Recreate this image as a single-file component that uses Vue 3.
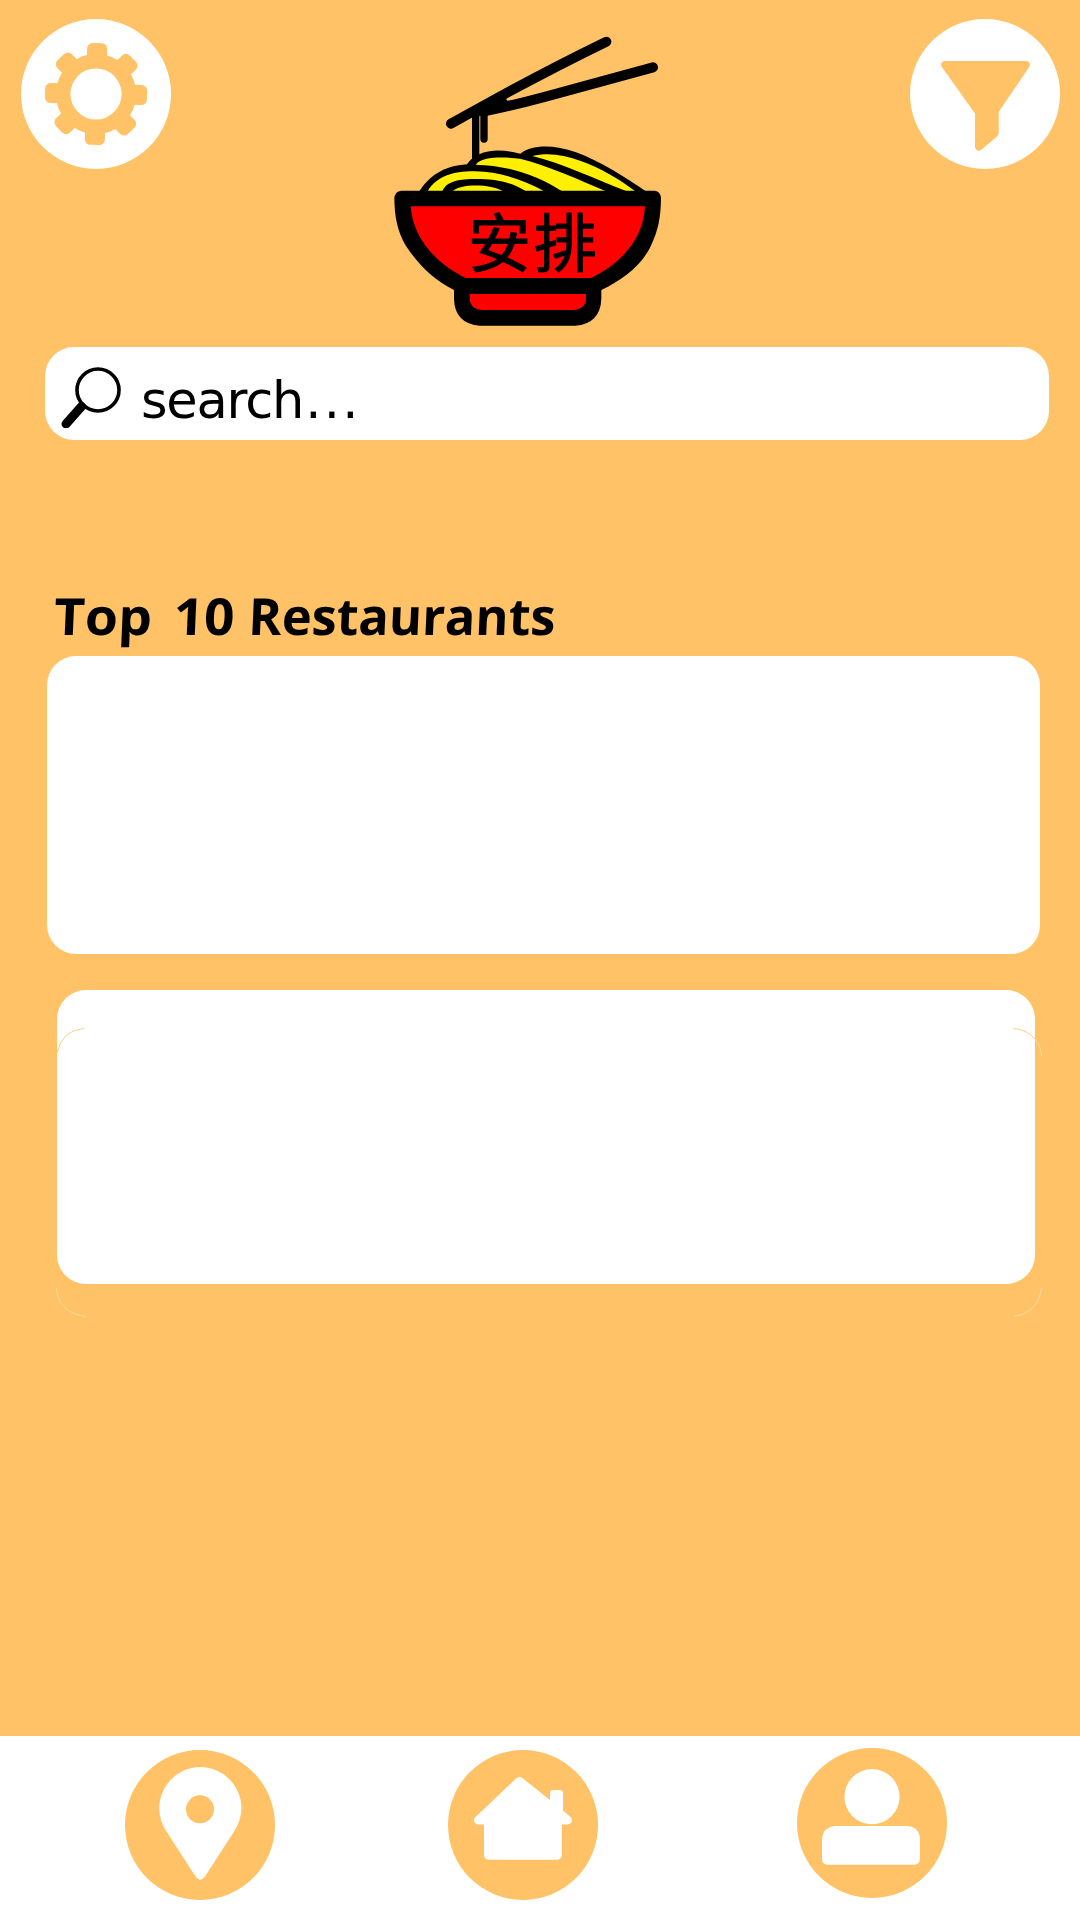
<script setup>
const teeth = [0, 45, 90, 135, 180, 225, 270, 315]
</script>

<template>
  <div class="screen">
    <header class="header">
      <button class="round light" aria-label="Settings">
        <svg viewBox="0 0 150 150">
          <g class="amber" transform="translate(75 75) rotate(1.4)">
            <rect v-for="a in teeth" :key="a" x="-10" y="-51" width="20" height="22" rx="5.5" :transform="`rotate(${a})`" />
            <circle r="40.2" />
          </g>
          <circle class="white" cx="75" cy="75" r="25.6" />
        </svg>
      </button>
      <svg class="logo" viewBox="0 0 900 960">
        <g fill="none" stroke="#000" stroke-linecap="round">
          <path stroke-width="30" d="M213 311L330 246Q510 147 679 65" />
          <path stroke-width="30" d="M312 274Q400 256 500 229L819 142" />
          <path stroke-width="22" d="M287 280V420M312 280V357" />
        </g>
        <path d="M300 255L370 225L382 242L420 240L330 284L275 292Z" />
        <path d="M115 520C145 468 190 438 261 433C285 395 345 380 421 401C455 374 520 373 588 397C660 423 730 468 806 520Z" />
        <g fill="#fff000">
          <path d="M143 514C170 467 225 453 285 454C360 456 430 478 493 514H438C390 484 340 475 270 477C223 479 196 490 187 514Z" />
          <path d="M218 514C238 491 330 490 370 514Z" />
          <path d="M287 434C305 409 370 410 420 416C500 435 600 480 678 514H546C480 471 390 436 287 434Z" />
          <path d="M457 408C500 397 550 403 600 422C660 443 720 478 766 514H740C650 480 550 430 457 408Z" />
        </g>
        <path d="M64 512H824Q842 514 843 536C842 590 836 630 810 683C780 740 730 778 664 810V836Q661 911 586 917H300Q224 911 222 836V810C160 778 120 740 78 678C50 630 44 585 43 536Q44 514 64 512Z" />
        <path fill="#f00" d="M92 559H795C790 660 720 732 633 774H257C170 732 98 655 92 559ZM269 822H618V836Q617 867 578 870H310Q270 868 269 836Z" />
        <text class="hanzi" y="739"><tspan x="264">安</tspan><tspan x="462">排</tspan></text>
      </svg>
      <button class="round light filter" aria-label="Filter">
        <svg viewBox="0 0 150 150">
          <path class="amber" d="M34.500 42H116.500Q121 43 119.500 47.500L88.700 93V114Q88.700 116 87 117.500L71 131Q66.500 133 65 128.500V94.500L31.500 47.500Q30 43 34.500 42Z" />
        </svg>
      </button>
    </header>

    <label class="search">
      <svg class="lens" viewBox="0 0 62 64">
        <circle cx="38" cy="26" r="21" fill="none" stroke="#000" stroke-width="3.6" />
        <path d="M21.500 42.500L6 60" stroke="#000" stroke-width="9" stroke-linecap="round" />
      </svg>
      <span class="placeholder">search<span class="dots">...</span></span>
    </label>

    <main class="content">
      <svg class="title" viewBox="0 0 560 80">
        <g transform="translate(2.500 0) skewX(-2.500)">
          <text x="11" y="49" textLength="98" lengthAdjust="spacingAndGlyphs">Top</text>
          <text x="130.500" y="49" textLength="61" lengthAdjust="spacingAndGlyphs">10</text>
          <text x="205.500" y="49" textLength="307" lengthAdjust="spacingAndGlyphs">Restaurants</text>
        </g>
      </svg>
      <section class="card first"></section>
      <section class="card second">
        <svg class="ghost" viewBox="0 0 986 289">
          <g fill="none">
            <path stroke="#ffcd82" d="M1 25Q6 2 28 .5M957.500 .5Q970 1 979 11" />
            <path stroke="#ffdcaa" stroke-width=".9" d="M979 11Q985 18 985.500 28M.5 260Q2 284 29 288.500M957.500 288.500Q982 285 985.500 260" />
          </g>
        </svg>
      </section>
    </main>

    <nav class="nav">
      <button class="round dark pin" aria-label="Map">
        <svg viewBox="0 0 150 150">
          <path class="white" d="M75.300 17C98 17 116.500 36 116.500 58.500Q116 70 110 80L80 126.500Q75.300 133 70.500 126.500L40.500 80Q34.500 70 34.200 58.500C34.200 36 52.500 17 75.300 17Z" />
          <circle class="amber" cx="75" cy="59.300" r="14" />
        </svg>
      </button>
      <button class="round dark home" aria-label="Home">
        <svg viewBox="0 0 150 150">
          <path class="white" d="M67.500 29Q71 25.500 75 28.500L102 50V43Q102 40 105 40H112Q115 40 115 43V60.500L122.500 67Q125 70 123.500 72.500Q122 74.500 119 74.500H113.700V105Q113.500 109 109.500 109.700H40Q36.300 109 36 105.500V74.500H29.500Q26.500 74 25.800 71Q25.500 69 27.500 67Z" />
        </svg>
      </button>
      <button class="round dark user" aria-label="Profile">
        <svg viewBox="0 0 150 150">
          <circle class="white" cx="75" cy="48.700" r="27.600" />
          <path class="white" d="M37.800 78H110Q121.500 78.500 123 90V111Q122.500 116 118 116.700H29.500Q25.500 116 25 111.500V90Q26.500 79 37.800 78Z" />
        </svg>
      </button>
    </nav>
  </div>
</template>

<style>
body { margin: 0; }
</style>

<style scoped>
.screen {
  display: flex;
  flex-direction: column;
  width: 1080px;
  height: 1920px;
  overflow: hidden;
  background: #ffc266;
}
.header {
  display: flex;
  align-items: flex-start;
  box-sizing: border-box;
  height: 347px;
  padding: 19px 20px 0 21px;
}
.round {
  flex: none;
  width: 150px;
  height: 150px;
  padding: 0;
  border: 0;
  border-radius: 50%;
}
.round svg { display: block; width: 150px; height: 150px; }
.light { background: #fff; }
.dark { background: #ffc266; }
.amber { fill: #ffc266; }
.white { fill: #fff; }
.logo { width: 300px; height: 320px; margin: 1px 0 0 209px; }
.filter { margin-left: auto; }
.hanzi { font-family: "Noto Sans CJK TC", sans-serif; font-size: 189px; stroke: #000; stroke-width: 3px; }
.search {
  display: flex;
  flex: none;
  box-sizing: border-box;
  width: 1004px;
  height: 93px;
  margin-left: 45px;
  padding: 17px 0 0 15px;
  border-radius: 29px;
  background: #fff;
}
.lens { width: 62px; height: 64px; }
.placeholder {
  margin: 7px 0 0 19px;
  font: 51px/60px "DejaVu Sans", Verdana, sans-serif;
  letter-spacing: -1.2px;
}
.dots { margin-left: 2px; letter-spacing: 2.3px; }
.content { flex: 1; padding-top: 146px; }
.title {
  display: block;
  overflow: visible;
  width: 560px;
  height: 80px;
  margin: 0 0 -10px 42px;
  font: 700 51px "Open Sans", sans-serif;
}
.card { border-radius: 29px; background: #fff; }
.first { width: 993px; height: 298px; margin-left: 47px; }
.second { position: relative; width: 978px; height: 294px; margin: 36px 0 0 57px; }
.ghost { position: absolute; left: -1px; top: 38px; width: 986px; height: 289px; }
.nav {
  display: flex;
  flex: none;
  height: 184px;
  background: #fff;
}
.pin { margin: 14px 0 0 125px; }
.home { margin: 14px 0 0 173px; }
.user { margin: 12px 0 0 199px; }
</style>
